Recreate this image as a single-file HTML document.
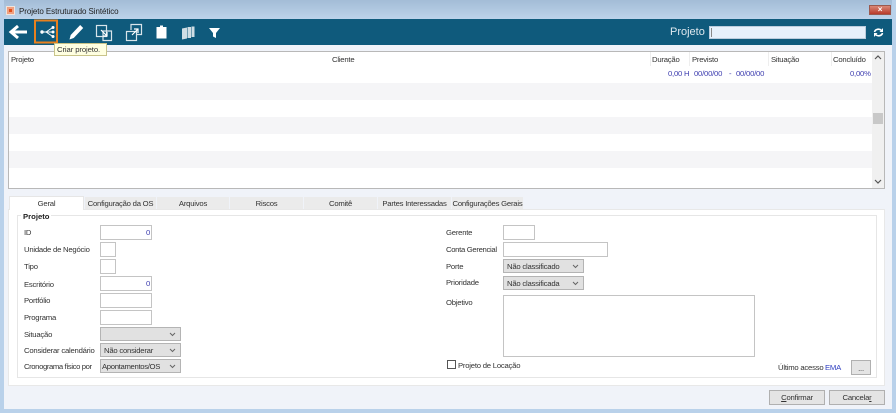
<!DOCTYPE html>
<html><head><meta charset="utf-8"><style>
html,body{margin:0;padding:0}
body{width:896px;height:413px;position:relative;overflow:hidden;background:#f0f3f9;font-family:"Liberation Sans",sans-serif;font-size:7.7px;letter-spacing:-.22px;color:#333}
.a{position:absolute}
.t{position:absolute;white-space:nowrap;line-height:11px}
.b{color:#3f3fb0}
.i{position:absolute;background:#fff;border:1px solid #c4c4c4;box-sizing:border-box}
.s{position:absolute;background:#e1e1e1;border:1px solid #b4b4b4;box-sizing:border-box;line-height:13px;color:#333;white-space:nowrap}
.s svg{position:absolute;right:4px;top:4px}
.tab{position:absolute;top:197px;height:12px;background:#ebebeb;text-align:center;line-height:13px;box-sizing:border-box;white-space:nowrap}
.btn{position:absolute;background:#e4e4e4;border:1px solid #b0b0b0;box-sizing:border-box;text-align:center;color:#333}
</style></head><body>
<div class="a" style="left:0;top:0;width:896px;height:19px;background:linear-gradient(#a3bcd6,#bcd3ea)"></div>
<div class="a" style="left:0;top:0;width:4px;height:413px;background:#b9d1ea"></div>
<div class="a" style="left:892px;top:0;width:4px;height:413px;background:#b9d1ea"></div>
<div class="a" style="left:0;top:409px;width:896px;height:4px;background:#b9d1ea"></div>
<div class="a" style="left:6px;top:6px;width:9px;height:9px;background:#f0a080;border:1px solid #f0e4dc;box-sizing:border-box"><div style="margin:2px;width:3px;height:3px;background:#e0501c"></div></div>
<div class="t" style="left:19px;top:6px;font-size:8px;letter-spacing:-.08px;color:#222">Projeto Estruturado Sintético</div>
<div class="a" style="left:869px;top:5px;width:22px;height:10px;background:linear-gradient(#d98878,#b83a2a);border:1px solid #9a5a50;box-sizing:border-box;color:#fff;text-align:center;font-size:8px;line-height:8px;font-weight:bold">×</div>

<div class="a" style="left:4px;top:19px;width:888px;height:26px;background:#0f5a7c"></div>
<svg class="a" style="left:0;top:19px" width="240" height="26" viewBox="0 19 240 26">
<path d="M27 32H13M18 26l-7 6 7 6" fill="none" stroke="#fff" stroke-width="3"/>
<rect x="35" y="20.500" width="22" height="22" fill="none" stroke="#e8801e" stroke-width="2"/>
<circle cx="42" cy="32" r="1.700" fill="#fff"/><path d="M43 32h9M46 32l6-4M46 32l6 4" fill="none" stroke="#fff" stroke-width="1"/>
<circle cx="53" cy="27.500" r="1.500" fill="#fff"/><circle cx="53" cy="32" r="1.500" fill="#fff"/><circle cx="53" cy="36.500" r="1.500" fill="#fff"/>
<path d="M69.500 39.500l1.200-4.500 9.500-10 3 3-9.500 10z" fill="#fff"/>
<g fill="none" stroke="#d8e4ea" stroke-width="1.200"><rect x="96.500" y="25.500" width="10" height="11"/><path d="M103 31h8.500v9.500H103z"/><path d="M101 30l6 6M107 32v4h-4" stroke="#fff"/>
<rect x="126.500" y="31.500" width="10" height="9"/><path d="M131 30v-5.500h10.500v10H137"/><path d="M132 35l6-6M134 29h4v4" stroke="#fff"/></g>
<path d="M156.500 27h3.500v-1.500h3V27h3.500v11.500h-10z" fill="#fff"/>
<g fill="#d0dde4"><path d="M182 28.500l5-1v11l-5 1z"/><path d="M187.500 27h3.500v11h-3.500z"/><path d="M191.500 26.500h3v10.500h-3z"/></g>
<path d="M209 28h11l-4 5v5l-3-1.500V33z" fill="#fff"/>
</svg>
<div class="t" style="left:670px;top:26px;font-size:11px;letter-spacing:0;line-height:13px;color:#dfe8ee">Projeto</div>
<div class="a" style="left:709px;top:26px;width:157px;height:13px;background:#e6f0fb;border:1px solid #bcd;box-sizing:border-box"><div style="width:1px;height:9px;margin:1px 0 0 1px;background:#888"></div></div>
<svg class="a" style="left:873px;top:27px" width="11" height="11" viewBox="0 0 11 11"><path d="M1.500 5a4 3.500 0 0 1 7-1.500M9.500 6a4 3.500 0 0 1-7 1.500" fill="none" stroke="#fff" stroke-width="1.600"/><path d="M10 1v4H6.500zM1 10V6h3.500z" fill="#fff"/></svg>

<div class="a" style="left:8px;top:51px;width:877px;height:138px;background:#fff;border:1px solid #b8b8b8;box-sizing:border-box"></div>
<div class="a" style="left:9px;top:83px;width:863px;height:17px;background:#f5f5f7"></div>
<div class="a" style="left:9px;top:117px;width:863px;height:17px;background:#f5f5f7"></div>
<div class="a" style="left:9px;top:151px;width:863px;height:17px;background:#f5f5f7"></div>
<div class="a" style="left:872px;top:52px;width:12px;height:136px;background:#f0f0f0"></div>
<div class="a" style="left:873px;top:113px;width:10px;height:11px;background:#c8c8c8"></div>
<svg class="a" style="left:874px;top:55px" width="8" height="130" viewBox="0 0 8 130"><path d="M1 4l3-3 3 3M1 125l3 3 3-3" fill="none" stroke="#555" stroke-width="1.200"/></svg>
<div class="a" style="left:650px;top:52px;width:1px;height:14px;background:#eee"></div>
<div class="a" style="left:689px;top:52px;width:1px;height:14px;background:#eee"></div>
<div class="a" style="left:768px;top:52px;width:1px;height:14px;background:#eee"></div>
<div class="a" style="left:831px;top:52px;width:1px;height:14px;background:#eee"></div>
<div class="t" style="left:11px;top:54px">Projeto</div>
<div class="t" style="left:332px;top:54px">Cliente</div>
<div class="t" style="left:652px;top:54px">Duração</div>
<div class="t" style="left:692px;top:54px">Previsto</div>
<div class="t" style="left:771px;top:54px">Situação</div>
<div class="t" style="left:833px;top:54px">Concluído</div>
<div class="t b" style="left:668px;top:68px">0,00 H</div>
<div class="t b" style="left:694px;top:68px">00/00/00</div>
<div class="t b" style="left:729px;top:68px">-</div>
<div class="t b" style="left:736px;top:68px">00/00/00</div>
<div class="t b" style="left:850px;top:68px">0,00%</div>

<div class="a" style="left:8px;top:209px;width:877px;height:177px;background:#fff;border:1px solid #e8e8e8;box-sizing:border-box"></div>
<div class="tab" style="left:9px;width:75px;top:196px;height:14px;background:#fff;border:1px solid #e6e6e6;border-bottom:0;line-height:13px">Geral</div>
<div class="tab" style="left:85px;width:71px">Configuração da OS</div>
<div class="tab" style="left:157px;width:72px">Arquivos</div>
<div class="tab" style="left:230px;width:73px">Riscos</div>
<div class="tab" style="left:304px;width:73px">Comitê</div>
<div class="tab" style="left:378px;width:73px">Partes Interessadas</div>
<div class="tab" style="left:452px;width:71px">Configurações Gerais</div>

<div class="a" style="left:17px;top:215px;width:860px;height:163px;border:1px solid #e6e6e6;box-sizing:border-box"></div>
<div class="t" style="left:21px;top:211px;background:#fff;padding:0 2px;font-weight:bold;color:#222;letter-spacing:0">Projeto</div>

<div class="t" style="left:24px;top:227px">ID</div>
<div class="i" style="left:100px;top:225px;width:52px;height:15px;text-align:right;padding-right:1px;line-height:14px;color:#3f3fb0">0</div>
<div class="t" style="left:24px;top:244px">Unidade de Negócio</div>
<div class="i" style="left:100px;top:242px;width:16px;height:15px"></div>
<div class="t" style="left:24px;top:261px">Tipo</div>
<div class="i" style="left:100px;top:259px;width:16px;height:15px"></div>
<div class="t" style="left:24px;top:279px">Escritório</div>
<div class="i" style="left:100px;top:276px;width:52px;height:15px;text-align:right;padding-right:1px;line-height:14px;color:#3f3fb0">0</div>
<div class="t" style="left:24px;top:295px">Portfólio</div>
<div class="i" style="left:100px;top:293px;width:52px;height:15px"></div>
<div class="t" style="left:24px;top:312px">Programa</div>
<div class="i" style="left:100px;top:310px;width:52px;height:15px"></div>
<div class="t" style="left:24px;top:329px">Situação</div>
<div class="s" style="left:100px;top:327px;width:81px;height:14px"><svg width="7" height="5"><path d="M1 1l2.500 2.500L6 1" fill="none" stroke="#666"/></svg></div>
<div class="t" style="left:24px;top:345px">Considerar calendário</div>
<div class="s" style="left:100px;top:343px;width:81px;height:14px;padding-left:3px">Não considerar<svg width="7" height="5"><path d="M1 1l2.500 2.500L6 1" fill="none" stroke="#666"/></svg></div>
<div class="t" style="left:24px;top:361px;letter-spacing:-.4px">Cronograma físico por</div>
<div class="s" style="left:100px;top:359px;width:81px;height:14px;padding-left:1px;letter-spacing:-.32px">Apontamentos/OS<svg width="7" height="5"><path d="M1 1l2.500 2.500L6 1" fill="none" stroke="#666"/></svg></div>

<div class="t" style="left:446px;top:227px">Gerente</div>
<div class="i" style="left:503px;top:225px;width:32px;height:15px"></div>
<div class="t" style="left:446px;top:244px;letter-spacing:-.32px">Conta Gerencial</div>
<div class="i" style="left:503px;top:242px;width:105px;height:15px"></div>
<div class="t" style="left:446px;top:261px">Porte</div>
<div class="s" style="left:503px;top:259px;width:81px;height:14px;padding-left:3px">Não classificado<svg width="7" height="5"><path d="M1 1l2.500 2.500L6 1" fill="none" stroke="#666"/></svg></div>
<div class="t" style="left:446px;top:277px">Prioridade</div>
<div class="s" style="left:503px;top:276px;width:81px;height:14px;padding-left:3px">Não classificada<svg width="7" height="5"><path d="M1 1l2.500 2.500L6 1" fill="none" stroke="#666"/></svg></div>
<div class="t" style="left:446px;top:297px">Objetivo</div>
<div class="i" style="left:503px;top:295px;width:252px;height:62px"></div>
<div class="a" style="left:447px;top:360px;width:9px;height:9px;background:#fff;border:1px solid #555;box-sizing:border-box"></div>
<div class="t" style="left:458px;top:360px">Projeto de Locação</div>
<div class="t" style="left:778px;top:362px">Último acesso</div>
<div class="t" style="left:825px;top:362px;color:#2f3fc0">EMA</div>
<div class="btn" style="left:851px;top:360px;width:20px;height:15px;line-height:15px">...</div>
<div class="btn" style="left:769px;top:390px;width:56px;height:15px;line-height:14px"><u>C</u>onfirmar</div>
<div class="btn" style="left:829px;top:390px;width:56px;height:15px;line-height:14px">Cancela<u>r</u></div>

<div class="a" style="left:54px;top:43px;width:53px;height:13px;background:#ffffe1;border:1px solid #c9c48a;box-sizing:border-box;line-height:11px;padding-left:2px;white-space:nowrap;color:#333;letter-spacing:-.1px">Criar projeto.</div>
</body></html>
